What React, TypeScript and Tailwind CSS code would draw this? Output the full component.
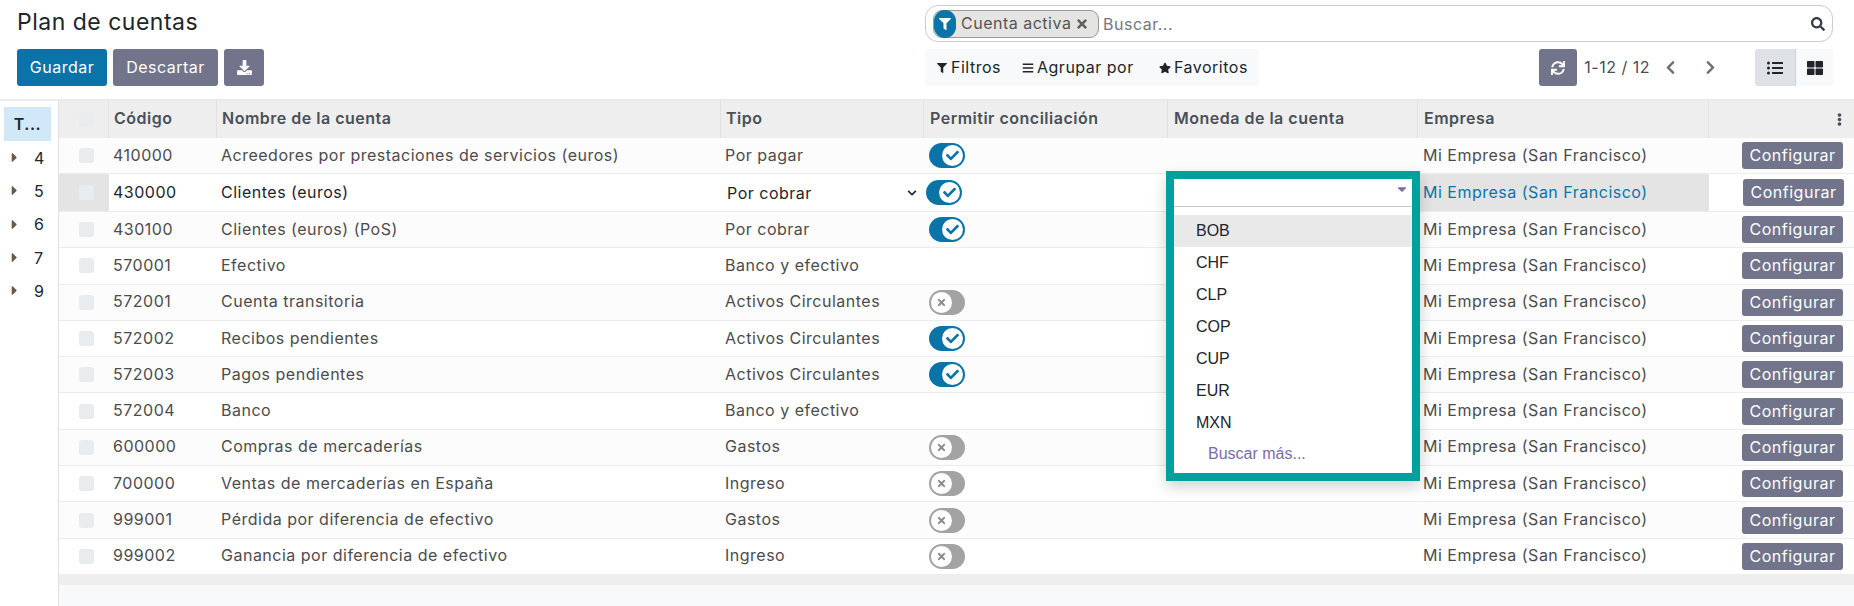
import { FaBars, FaCaretDown, FaCaretRight, FaCheck, FaChevronDown, FaChevronLeft, FaChevronRight, FaDownload, FaEllipsisV, FaFilter, FaListUl, FaSearch, FaStar, FaSync, FaThLarge, FaTimes } from "react-icons/fa";

type Account = {
  code: string;
  name: string;
  type: string;
  reconcile: boolean | null;
};

const accounts: Account[] = [
  { code: "410000", name: "Acreedores por prestaciones de servicios (euros)", type: "Por pagar", reconcile: true },
  { code: "430000", name: "Clientes (euros)", type: "Por cobrar", reconcile: true },
  { code: "430100", name: "Clientes (euros) (PoS)", type: "Por cobrar", reconcile: true },
  { code: "570001", name: "Efectivo", type: "Banco y efectivo", reconcile: null },
  { code: "572001", name: "Cuenta transitoria", type: "Activos Circulantes", reconcile: false },
  { code: "572002", name: "Recibos pendientes", type: "Activos Circulantes", reconcile: true },
  { code: "572003", name: "Pagos pendientes", type: "Activos Circulantes", reconcile: true },
  { code: "572004", name: "Banco", type: "Banco y efectivo", reconcile: null },
  { code: "600000", name: "Compras de mercaderías", type: "Gastos", reconcile: false },
  { code: "700000", name: "Ventas de mercaderías en España", type: "Ingreso", reconcile: false },
  { code: "999001", name: "Pérdida por diferencia de efectivo", type: "Gastos", reconcile: false },
  { code: "999002", name: "Ganancia por diferencia de efectivo", type: "Ingreso", reconcile: false },
];

const currencies = ["BOB", "CHF", "CLP", "COP", "CUP", "EUR", "MXN"];
const groups = ["4", "5", "6", "7", "9"];
const columns = "grid grid-cols-[50px_108px_504px_203px_244px_250px_291px_145px]";
const cellText = "truncate pb-[2px] pl-[4px]";
const headCell = "flex items-center border-r border-[#e2e2e2] pb-[3px]";

const Toggle = ({ on }: { on: boolean }) =>
  on ? (
    <div className="ml-[5px] flex h-[25px] w-[36px] items-center justify-end rounded-full bg-[#0a74a9] pr-[2px]">
      <div className="flex h-[21px] w-[21px] items-center justify-center rounded-full bg-white">
        <FaCheck className="text-[13px] text-[#0a74a9]" />
      </div>
    </div>
  ) : (
    <div className="ml-[5px] flex h-[25px] w-[36px] items-center justify-start rounded-full bg-[#a3a3a3] pl-[2px]">
      <div className="flex h-[21px] w-[21px] items-center justify-center rounded-full bg-white">
        <FaTimes className="text-[11px] text-[#8c8c8c]" />
      </div>
    </div>
  );

const CurrencyDropdown = () => (
  <div className="absolute left-[-2px] top-[-3px] z-10 h-[310px] w-[254px] border-[8px] border-[#00a09d] bg-white font-['Liberation_Sans',sans-serif] text-[16px] tracking-normal text-[#212529] shadow-[0_6px_14px_rgba(0,0,0,0.18)]">
    <div className="flex h-[28px] items-start justify-end border-b border-[#c8c8c8] pr-[3px]">
      <FaCaretDown className="mt-[3px] text-[14px] text-[#7c6ba8]" />
    </div>
    <div className="pt-[8px]">
      {currencies.map((currency, index) => (
        <div
          key={currency}
          className={`flex h-[32px] items-center pl-[22px] ${index === 0 ? "bg-[#e9e9e9]" : ""}`}
        >
          {currency}
        </div>
      ))}
      <div className="flex h-[29px] items-center pl-[34px] text-[#7c6ba8]">Buscar más...</div>
    </div>
  </div>
);

export default function App() {
  return (
    <div className="flex h-[606px] w-[1854px] flex-col overflow-hidden bg-white font-['Inter',sans-serif] text-[16px] tracking-[0.5px] text-[#4c4c4c]">
      <div className="flex h-[99px] shrink-0 justify-between pl-[17px] pr-[21px] pt-[5px]">
        <div>
          <h1 className="flex h-[37px] items-center pb-[2px] text-[23px] text-[#212529]">Plan de cuentas</h1>
          <div className="mt-[7px] flex gap-[6px] text-white">
            <button className="h-[37px] w-[90px] rounded-[3px] bg-[#0a74a9] pb-[2px]">Guardar</button>
            <button className="h-[37px] w-[105px] rounded-[3px] bg-[#71748a] pb-[2px]">Descartar</button>
            <button className="flex h-[37px] w-[40px] items-center justify-center rounded-[3px] bg-[#71748a]">
              <FaDownload className="text-[15px]" />
            </button>
          </div>
        </div>
        <div className="w-[908px]">
          <div className="flex h-[37px] items-center rounded-[13px] border border-[#cccccc] pl-[7px] pr-[7px]">
            <div className="flex h-[28px] w-[166px] items-center rounded-[9px] border border-[#9a9a9a] bg-[#e4e4e2]">
              <div className="flex h-[28px] w-[22px] shrink-0 items-center justify-center rounded-full bg-[#0a74a9] text-white">
                <FaFilter className="text-[12px]" />
              </div>
              <span className="ml-[5px] -translate-y-[1px] whitespace-nowrap text-[#555555]">Cuenta activa</span>
              <FaTimes className="ml-[4px] shrink-0 text-[14px] text-[#5f5f5f]" />
            </div>
            <span className="ml-[4px] flex-1 text-[#77777a]">Buscar...</span>
            <FaSearch className="text-[14px] text-[#333b44]" />
          </div>
          <div className="mt-[7px] flex items-center">
            <div className="flex h-[37px] w-[335px] items-center rounded-[3px] bg-[#f8f9fa] text-[#212529]">
              <FaFilter className="ml-[12px] text-[10px]" />
              <span className="ml-[4px] w-[71px] pb-[2px]">Filtros</span>
              <FaBars className="text-[12px]" />
              <span className="ml-[3px] w-[122px] whitespace-nowrap pb-[2px]">Agrupar por</span>
              <FaStar className="text-[12px]" />
              <span className="ml-[3px] pb-[2px]">Favoritos</span>
            </div>
            <button className="ml-[280px] flex h-[37px] w-[38px] items-center justify-center rounded-[3px] bg-[#71748a] text-white">
              <FaSync className="text-[14px]" />
            </button>
            <span className="ml-[7px] w-[79px] pb-[2px]">1-12 / 12</span>
            <FaChevronLeft className="text-[15px] text-[#6c6f72]" />
            <FaChevronRight className="ml-[25px] text-[15px] text-[#6c6f72]" />
            <div className="ml-[37px] flex h-[37px] overflow-hidden rounded-[3px] bg-[#f8f9fa] text-[#212529]">
              <div className="flex w-[41px] items-center justify-center border-r border-[#cfd3d9] bg-[#dee2e6]">
                <FaListUl className="text-[16px]" />
              </div>
              <div className="flex w-[37px] items-center justify-center">
                <FaThLarge className="text-[16px]" />
              </div>
            </div>
          </div>
        </div>
      </div>

      <div className="flex flex-1 border-t-2 border-[#e9ecef]">
        <div className="w-[59px] shrink-0 border-r border-[#dee2e6] pl-[4px] pr-[7px] pt-[6px]">
          <div className="flex h-[34px] items-center justify-center bg-[#d0e8f8] font-semibold text-[#212529]">T...</div>
          <div>
            {groups.map((group) => (
              <div key={group} className="flex h-[33.3px] items-center text-[#212529]">
                <FaCaretRight className="ml-[3px] text-[15px] text-[#6b5a4a]" />
                <span className="ml-[12px]">{group}</span>
              </div>
            ))}
          </div>
        </div>

        <div className="flex-1 bg-[#f8f9fa]">
          <div className={`${columns} h-[37px] bg-[#eeeeee] font-semibold text-[#495057]`}>
            <div className="flex items-center border-r border-[#e2e2e2] pl-[20px]">
              <div className="h-[15px] w-[15px] rounded-[3px] bg-[#e9ecef]" />
            </div>
            <div className={`${headCell} pl-[5px]`}>Código</div>
            <div className={`${headCell} pl-[5px]`}>Nombre de la cuenta</div>
            <div className={`${headCell} pl-[5px]`}>Tipo</div>
            <div className={`${headCell} pl-[6px]`}>Permitir conciliación</div>
            <div className={`${headCell} pl-[6px]`}>Moneda de la cuenta</div>
            <div className={`${headCell} pl-[6px]`}>Empresa</div>
            <div className="flex items-center justify-end pr-[8px]">
              <FaEllipsisV className="text-[13px] text-[#495057]" />
            </div>
          </div>

          {accounts.map((account, index) => {
            const editing = index === 1;
            const rowClass = editing
              ? "h-[38px] bg-white text-[#212529]"
              : index === 0
                ? "h-[36px] bg-[#fcfcfc]"
                : index % 2 === 0
                  ? "h-[36.3px] bg-[#fcfcfc]"
                  : "h-[36.3px] bg-white";
            return (
              <div key={account.code} className={`${columns} ${rowClass} items-center border-b border-[#ececec]`}>
                <div className={`flex h-full items-center pl-[20px] ${editing ? "bg-[#e4e4e4]" : ""}`}>
                  <div className="h-[15px] w-[15px] rounded-[3px] bg-[#e9ecef]" />
                </div>
                <div className={cellText}>{account.code}</div>
                <div className={cellText}>{account.name}</div>
                {editing ? (
                  <div className="flex items-center justify-between pl-[6px] pr-[7px]">
                    <span>{account.type}</span>
                    <FaChevronDown className="text-[10px]" />
                  </div>
                ) : (
                  <div className={cellText}>{account.type}</div>
                )}
                <div className={editing ? "-ml-[3px]" : ""}>
                  {account.reconcile !== null && <Toggle on={account.reconcile} />}
                </div>
                <div className="relative h-full">{editing && <CurrencyDropdown />}</div>
                <div className={`flex h-full items-center pb-[2px] pl-[5px] ${editing ? "bg-[#e4e4e4] text-[#0a74a9]" : ""}`}>
                  Mi Empresa (San Francisco)
                </div>
                <div className="flex justify-end pr-[11px]">
                  <button className={`h-[27px] w-[101px] rounded-[3px] bg-[#71748a] pb-[1px] text-white ${editing ? "mr-[-1px]" : ""}`}>
                    Configurar
                  </button>
                </div>
              </div>
            );
          })}
          <div className="h-[10px] bg-[#eeeeee]" />
        </div>
      </div>
    </div>
  );
}
